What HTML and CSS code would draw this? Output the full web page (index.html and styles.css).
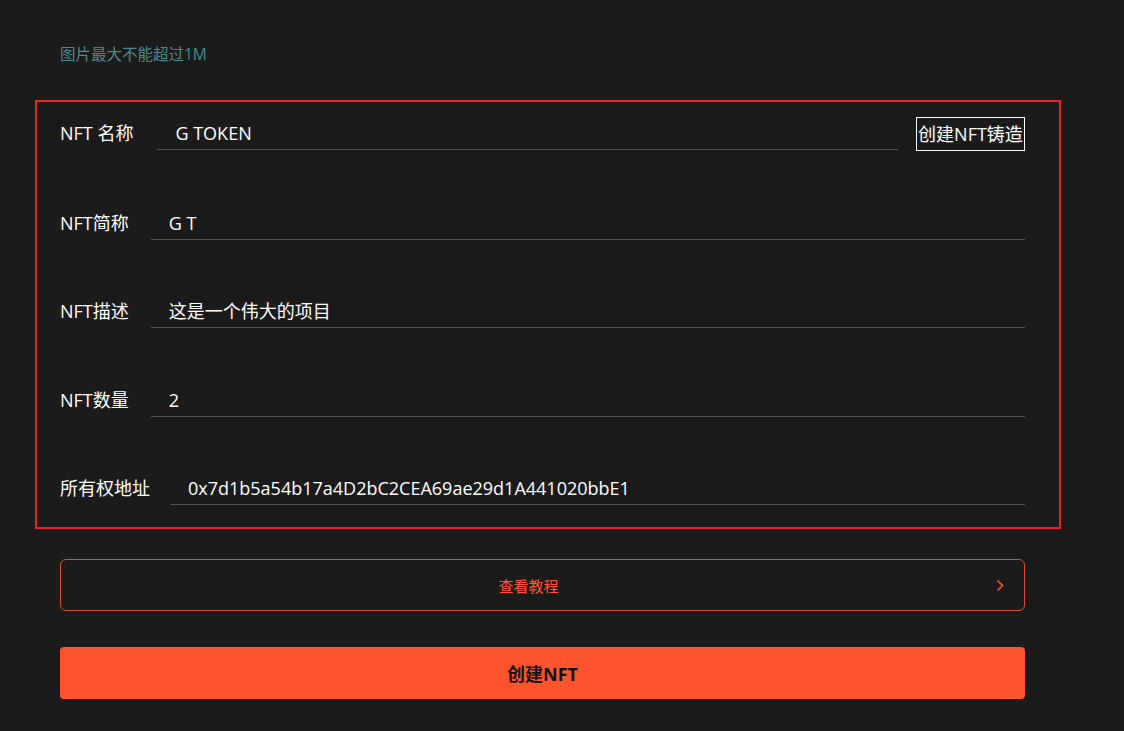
FILE: index.html
```html
<!DOCTYPE html>
<html lang="zh-CN">
<head>
<meta charset="utf-8">
<title>创建NFT</title>
<link rel="stylesheet" href="styles.css">
</head>
<body>
<div class="page">
  <p class="tip">图片最大不能超过1M</p>
  <div class="form">
    <div class="row row-first">
      <label class="label label-nft">NFT 名称</label>
      <div class="input">G TOKEN</div>
      <button class="mint-btn">创建NFT铸造</button>
    </div>
    <div class="row">
      <label class="label label-nft">NFT简称</label>
      <div class="input">G T</div>
    </div>
    <div class="row">
      <label class="label label-nft">NFT描述</label>
      <div class="input">这是一个伟大的项目</div>
    </div>
    <div class="row">
      <label class="label label-nft">NFT数量</label>
      <div class="input">2</div>
    </div>
    <div class="row">
      <label class="label">所有权地址</label>
      <div class="input">0x7d1b5a54b17a4D2bC2CEA69ae29d1A441020bbE1</div>
    </div>
  </div>
  <div class="tutorial">
    <span class="tutorial-text">查看教程</span>
    <svg class="chevron" width="8" height="13" viewBox="0 0 8 13"><path d="M1.5 1.5 L6.5 6.5 L1.5 11.5" fill="none" stroke="#ff5530" stroke-width="1.5"/></svg>
  </div>
  <button class="create">创建NFT</button>
</div>
</body>
</html>
```
FILE: styles.css
```css
* { box-sizing: border-box; }
html, body {
  margin: 0;
  padding: 0;
  background: #1b1b1b;
}
body {
  font-family: "Open Sans", "Noto Sans CJK SC", sans-serif;
  color: #fff;
}
.page {
  width: 1124px;
  padding-bottom: 32px;
}
.tip {
  margin: 44px 0 0 60px;
  font-size: 15.5px;
  line-height: 20px;
  color: #4e8a8c;
}
.form {
  margin: 36px 0 0 35px;
  width: 1026px;
  border: 2px solid #e8232b;
  padding: 15px 34px 22px 23px;
}
.row {
  display: flex;
  align-items: flex-start;
  margin-top: 55.5px;
}
.row-first { margin-top: 0; }
.label {
  font-size: 18px;
  line-height: 32px;
  height: 33px;
  white-space: nowrap;
  margin-right: 20px;
  color: #fff;
}
.label-nft { margin-right: 22px; }
.row-first .label { margin-right: 24px; }
.input {
  flex: 1;
  height: 33px;
  border-bottom: 1px solid #555;
  padding-left: 18px;
  font-size: 18px;
  line-height: 32px;
  color: #fff;
  white-space: nowrap;
}
.mint-btn {
  margin-left: 18px;
  height: 34px;
  width: 109px;
  padding: 0;
  border: 1px solid #fff;
  background: transparent;
  color: #fff;
  font-family: inherit;
  font-size: 18px;
  line-height: 30px;
  white-space: nowrap;
}
.tutorial {
  margin: 30px 0 0 60px;
  width: 965px;
  height: 52px;
  border: 1px solid #d9502f;
  border-radius: 6px;
  display: flex;
  align-items: center;
  padding-right: 20px;
  font-size: 15px;
  color: #ff5530;
}
.tutorial-text {
  flex: 1;
  text-align: center;
}
.chevron {
  flex: none;
}
.create {
  display: block;
  margin: 36px 0 0 60px;
  width: 965px;
  height: 52px;
  border: none;
  border-radius: 4px;
  background: #ff532e;
  color: #111;
  font-family: inherit;
  font-size: 18px;
  font-weight: 700;
}
```
